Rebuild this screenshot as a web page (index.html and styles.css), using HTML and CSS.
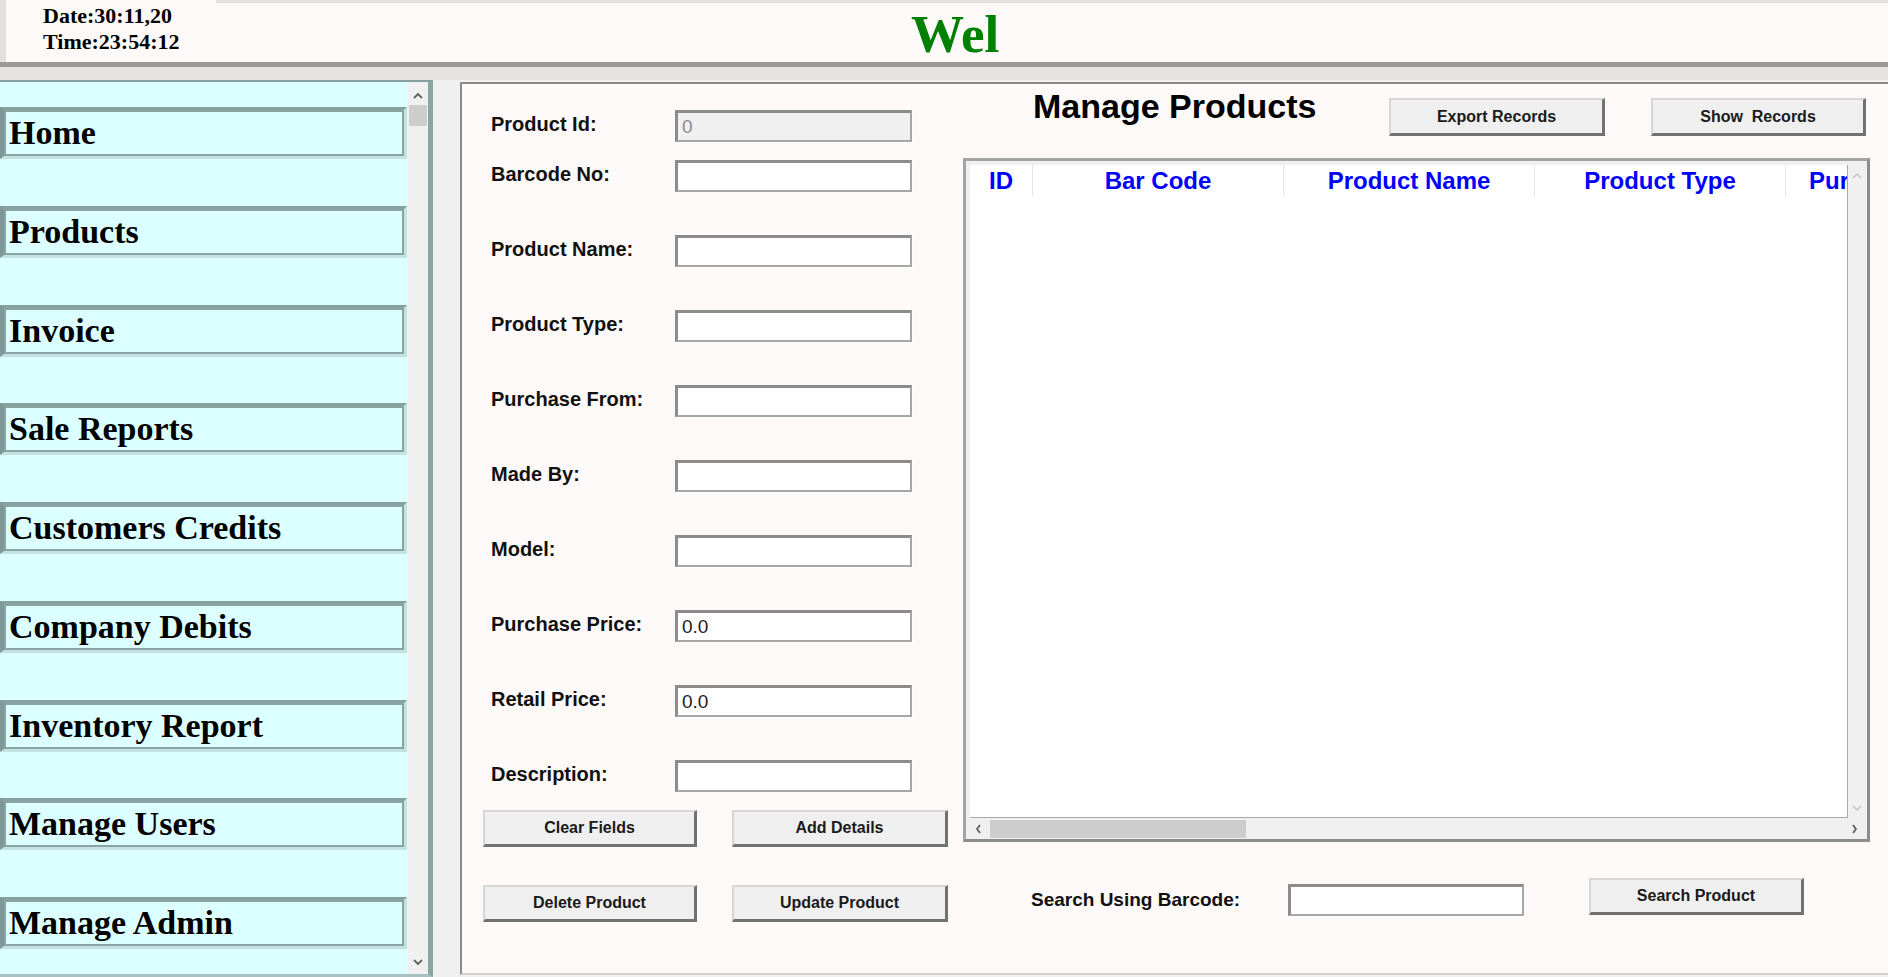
FILE: index.html
```html
<!DOCTYPE html>
<html lang="en">
<head>
  <meta charset="UTF-8">
  <meta name="viewport" content="width=device-width, initial-scale=1.0">
  <title>Manage Products</title>
  <link rel="stylesheet" href="styles.css">
</head>
<body>
  <header class="header">
    <div class="clock">
      <div>Date:30:11,20</div>
      <div>Time:23:54:12</div>
    </div>
    <div class="title-area">
      <span class="welcome">Wel</span>
    </div>
  </header>
  <div class="header-gap"></div>

  <div class="workspace">
    <aside class="sidebar">
      <nav class="nav-list">
        <div class="nav-btn"><span>Home</span></div>
        <div class="nav-btn"><span>Products</span></div>
        <div class="nav-btn"><span>Invoice</span></div>
        <div class="nav-btn"><span>Sale Reports</span></div>
        <div class="nav-btn"><span>Customers Credits</span></div>
        <div class="nav-btn"><span>Company Debits</span></div>
        <div class="nav-btn"><span>Inventory Report</span></div>
        <div class="nav-btn"><span>Manage Users</span></div>
        <div class="nav-btn"><span>Manage Admin</span></div>
      </nav>
      <div class="side-scroll">
        <svg class="arrow dark" width="10" height="7" viewBox="0 0 10 7"><path d="M1 6 L5 2 L9 6" fill="none" stroke="#606060" stroke-width="1.8"/></svg>
        <div class="side-thumb"></div>
        <div class="spacer"></div>
        <svg class="arrow dark" width="10" height="7" viewBox="0 0 10 7"><path d="M1 1 L5 5 L9 1" fill="none" stroke="#606060" stroke-width="1.8"/></svg>
      </div>
    </aside>

    <main class="panel">
      <section class="form-col">
        <div class="field first">
          <label>Product Id:</label>
          <input class="readonly" type="text" value="0" readonly>
        </div>
        <div class="field">
          <label>Barcode No:</label>
          <input type="text">
        </div>
        <div class="field">
          <label>Product Name:</label>
          <input type="text">
        </div>
        <div class="field">
          <label>Product Type:</label>
          <input type="text">
        </div>
        <div class="field">
          <label>Purchase From:</label>
          <input type="text">
        </div>
        <div class="field">
          <label>Made By:</label>
          <input type="text">
        </div>
        <div class="field">
          <label>Model:</label>
          <input type="text">
        </div>
        <div class="field">
          <label>Purchase Price:</label>
          <input type="text" value="0.0">
        </div>
        <div class="field">
          <label>Retail Price:</label>
          <input type="text" value="0.0">
        </div>
        <div class="field last">
          <label>Description:</label>
          <input type="text">
        </div>

        <div class="btn-row">
          <button class="btn wide">Clear Fields</button>
          <button class="btn wider">Add Details</button>
        </div>
        <div class="btn-row second">
          <button class="btn wide">Delete Product</button>
          <button class="btn wider">Update Product</button>
        </div>
      </section>

      <section class="records">
        <div class="records-head">
          <h2>Manage Products</h2>
          <button class="btn export">Export Records</button>
          <button class="btn show">Show&nbsp; Records</button>
        </div>

        <div class="table-box">
          <div class="table-view">
            <table>
              <thead>
                <tr>
                  <th class="col-id">ID</th>
                  <th>Bar Code</th>
                  <th>Product Name</th>
                  <th>Product Type</th>
                  <th class="col-cut">Purchase From</th>
                </tr>
              </thead>
              <tbody></tbody>
            </table>
          </div>
          <div class="vscroll">
            <svg width="10" height="7" viewBox="0 0 10 7"><path d="M1 6 L5 2 L9 6" fill="none" stroke="#c2c2c2" stroke-width="1.5"/></svg>
            <div class="spacer"></div>
            <svg width="10" height="7" viewBox="0 0 10 7"><path d="M1 1 L5 5 L9 1" fill="none" stroke="#c2c2c2" stroke-width="1.5"/></svg>
          </div>
          <div class="hscroll">
            <svg width="7" height="10" viewBox="0 0 7 10"><path d="M5 1 L2 5 L5 9" fill="none" stroke="#606060" stroke-width="1.8"/></svg>
            <div class="h-thumb"></div>
            <div class="spacer"></div>
            <svg width="7" height="10" viewBox="0 0 7 10"><path d="M2 1 L5 5 L2 9" fill="none" stroke="#606060" stroke-width="1.8"/></svg>
          </div>
        </div>

        <div class="search-row">
          <label>Search Using Barcode:</label>
          <input type="text">
          <button class="btn search">Search Product</button>
        </div>
      </section>
    </main>
  </div>
</body>
</html>
```

FILE: styles.css
```css
body {
  margin: 0;
  width: 1888px;
  height: 977px;
  overflow: hidden;
  background-color: #f0f0f0;
  font-family: 'Liberation Sans', Arial, sans-serif;
}

/* top bar */
.header {
  display: flex;
  height: 62px;
  background-color: #fdf9f8;
  border-bottom: 5px solid #9c9a98;
}

.clock {
  width: 216px;
  border-left: 6px solid #e2e0de;
  padding: 3px 0 0 37px;
  box-sizing: border-box;
  font-family: 'Liberation Serif', 'Times New Roman', serif;
  font-weight: bold;
  font-size: 22px;
  line-height: 26px;
  color: #000;
}

.title-area {
  flex: 1;
  border-top: 3px solid #e4e2e0;
  padding-left: 695px;
  display: flex;
  align-items: center;
  padding-top: 2px;
}

.welcome {
  font-family: 'Liberation Serif', 'Times New Roman', serif;
  font-weight: bold;
  font-size: 53px;
  color: #008000;
}

.header-gap {
  height: 13px;
  background-color: #e6e4e2;
}

.workspace {
  display: flex;
  height: 897px;
}

/* left menu */
.sidebar {
  display: flex;
  width: 433px;
  box-sizing: border-box;
  background-color: #dcffff;
  border-top: 2px solid #88a0a0;
  border-right: 5px solid #8ca4a4;
  border-bottom: 3px solid #a8c0c0;
}

.nav-list {
  width: 408px;
  padding-top: 25px;
  display: flex;
  flex-direction: column;
  gap: 46.75px;
}

.nav-btn {
  width: 407px;
  height: 52px;
  box-sizing: border-box;
  border-style: solid;
  border-width: 3px 3px 3px 4px;
  border-color: #88a0a0 #c4e2e2 #c4e2e2 #7f9999;
  display: flex;
}

.nav-btn span {
  flex: 1;
  border: 2px solid #8aa4a4;
  padding: 2px 0 0 3px;
  font-family: 'Liberation Serif', 'Times New Roman', serif;
  font-weight: bold;
  font-size: 34px;
  line-height: 38px;
  color: #000;
  white-space: nowrap;
}

.side-scroll {
  width: 20px;
  background-color: #f0f0f0;
  display: flex;
  flex-direction: column;
  align-items: center;
  padding: 10px 0 8px;
}

.side-thumb {
  width: 18px;
  height: 21px;
  margin-top: 6px;
  background-color: #cdcdcd;
}

.spacer {
  flex: 1;
}

/* main panel */
.panel {
  flex: 1;
  margin: 2px 0 0 27px;
  height: 893px;
  box-sizing: border-box;
  display: flex;
  background-color: #fdf9f8;
  border-top: 2px solid #8b8b8b;
  border-left: 2px solid #8b8b8b;
  border-bottom: 2px solid #d0d0d0;
  padding-left: 21px;
}

.form-col {
  width: 465px;
  padding-top: 26px;
}

.field {
  display: flex;
  align-items: center;
  height: 32px;
  margin-bottom: 43px;
}

.field.first,
.field.last {
  margin-bottom: 18px;
}

.field label {
  width: 184px;
  padding: 0 0 4px 8px;
  font-weight: bold;
  font-size: 20px;
  color: #111;
}

input {
  width: 237px;
  height: 32px;
  box-sizing: border-box;
  border-style: solid;
  border-width: 3px 2px 2px 3px;
  border-color: #8c8c8c #a6a6a6 #a6a6a6 #8c8c8c;
  box-shadow: 1px 1px 0 #ffffff;
  background-color: #ffffff;
  padding: 0 0 0 4px;
  font-family: 'Liberation Sans', Arial, sans-serif;
  font-size: 19px;
  color: #222;
  outline: none;
}

input.readonly {
  background-color: #f0f0f0;
  color: #8a8a8a;
}

.btn {
  height: 37px;
  box-sizing: border-box;
  border-style: solid;
  border-width: 2px 3px 3px 2px;
  border-color: #d6d6d6 #727272 #727272 #d6d6d6;
  background-color: #efefef;
  font-family: 'Liberation Sans', Arial, sans-serif;
  font-weight: bold;
  font-size: 16px;
  color: #1a1a1a;
  padding: 0;
}

.btn-row {
  display: flex;
  gap: 35px;
}

.btn-row.second {
  margin-top: 38px;
}

.btn.wide {
  width: 214px;
}

.btn.wider {
  width: 216px;
}

/* records side */
.records {
  width: 907px;
  margin-left: 15px;
  padding-top: 14px;
}

.records-head {
  display: flex;
  align-items: flex-start;
  height: 38px;
}

.records-head h2 {
  margin: -11px 0 0 70px;
  font-size: 34px;
  line-height: 38px;
  font-weight: bold;
  color: #000;
}

.btn.export {
  width: 216px;
  margin-left: auto;
  height: 38px;
}

.btn.show {
  width: 215px;
  margin: 0 4px 0 46px;
  height: 38px;
}

.table-box {
  margin-top: 22px;
  height: 684px;
  box-sizing: border-box;
  border-style: solid;
  border-width: 3px;
  border-color: #a3a3a3 #8c8c8c #8c8c8c #a3a3a3;
  padding: 4px 1px 0 4px;
  background-color: #f0f0f0;
  display: grid;
  grid-template-columns: 1fr 18px;
  grid-template-rows: 1fr 21px;
}

.table-view {
  background-color: #ffffff;
  overflow: hidden;
  border-right: 1px solid #a8a8a8;
  border-bottom: 1px solid #a8a8a8;
}

table {
  border-collapse: collapse;
  table-layout: fixed;
  width: 1062px;
}

th {
  width: 250px;
  height: 31px;
  padding: 0;
  border-right: 1px solid #e6e6e6;
  font-size: 24px;
  font-weight: bold;
  color: #0000ff;
  text-align: center;
  white-space: nowrap;
  overflow: hidden;
}

th.col-id {
  width: 62px;
}

th.col-cut {
  text-align: left;
  padding-left: 23px;
}

.vscroll {
  display: flex;
  flex-direction: column;
  align-items: center;
  padding: 7px 0 6px;
}

.hscroll {
  grid-column: 1 / 3;
  display: flex;
  align-items: center;
  padding: 0 8px 0 5px;
}

.h-thumb {
  width: 256px;
  height: 18px;
  margin-left: 8px;
  background-color: #cdcdcd;
}

.search-row {
  display: flex;
  align-items: flex-start;
  margin-top: 36px;
}

.search-row label {
  width: 257px;
  margin-left: 68px;
  line-height: 38px;
  padding-top: 3px;
  font-weight: bold;
  font-size: 19px;
  color: #111;
}

.search-row input {
  width: 236px;
  margin-top: 6px;
}

.btn.search {
  width: 215px;
  margin-left: 65px;
}
```
